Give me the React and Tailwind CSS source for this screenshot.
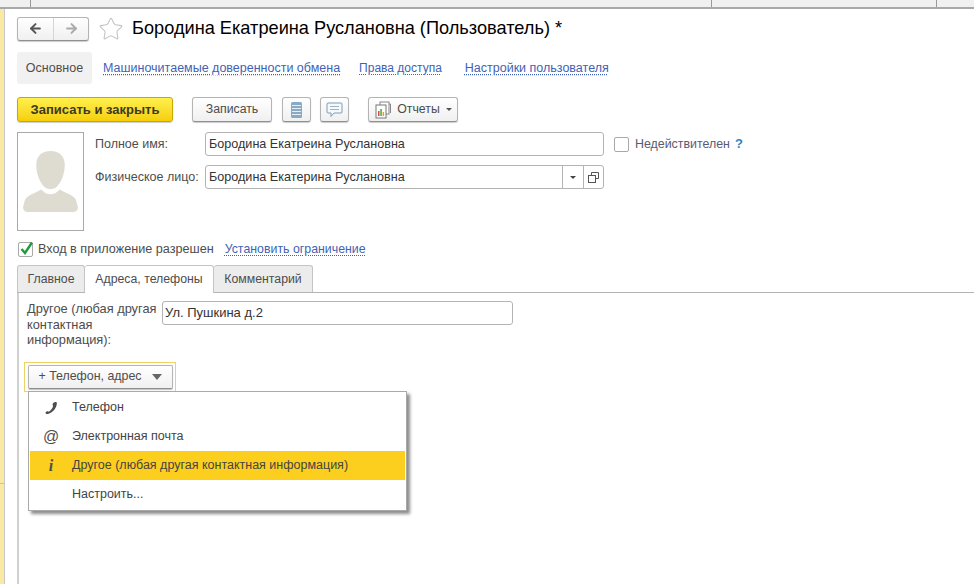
import React from "react";
import { ArrowLeft, ArrowRight, Star } from "lucide-react";

function Link({ children, className = "" }) {
  return (
    <span className={`text-[#3f62b4] underline decoration-dotted decoration-[#3f62b4] underline-offset-2 ${className}`}>
      {children}
    </span>
  );
}

function GrayButton({ children, className = "" }) {
  return (
    <div className={`flex items-center justify-center h-[25px] text-[12.3px] rounded-[3px] border border-[#b4b4b4] border-b-[#8f8f8f] bg-gradient-to-b from-white to-[#f0f0f0] shadow-[0_1px_1px_rgba(0,0,0,0.2)] ${className}`}>
      {children}
    </div>
  );
}

function Field({ children, className = "" }) {
  return (
    <div className={`flex items-center h-[24px] rounded-[3px] border border-[#b4b4b4] bg-white text-[#333] ${className}`}>
      {children}
    </div>
  );
}

// силуэт пользователя
function Avatar() {
  return (
    <svg width="55" height="62" viewBox="0 0 54 66" preserveAspectRatio="none">
      <path d="M27 0c9 0 14 6 14 15 0 10-4 20-9 24-3 2-7 2-10 0-5-4-9-14-9-24C13 6 18 0 27 0z" fill="#dedcd0" />
      <path d="M18 41c3 4 6 5 9 5s6-1 9-5c6 4 14 6 16 11l2 8c0 3-2 5-4 5H4c-2 0-4-2-4-5l2-8c2-5 10-7 16-11z" fill="#dedcd0" />
    </svg>
  );
}

function MenuItem({ icon, active, children }) {
  return (
    <div className={`flex items-center h-[29px] ${active ? "bg-[#fccf1f]" : ""}`}>
      <div className="w-[42px] flex justify-center text-[#4d4d4d]">{icon}</div>
      <span className="text-[#444]">{children}</span>
    </div>
  );
}

export default function App() {
  return (
    <div
      className="w-[974px] h-[584px] overflow-hidden bg-white flex flex-col text-[12.5px] text-[#4d4d4d]"
      style={{ fontFamily: '"Liberation Sans", Arial, sans-serif' }}
    >
      {/* верхняя полоса */}
      <div className="h-[9px] shrink-0 bg-[#f0f0f0] border-b-2 border-[#a8a8a8] flex">
        <div className="w-[31px] border-r border-[#999]" />
        <div className="w-[681px] border-r border-[#999]" />
        <div className="w-[225px] border-r border-[#999]" />
      </div>

      <div className="flex flex-1 min-h-0">
        {/* левая полоса */}
        <div className="w-[5px] shrink-0 bg-[#f9e9a2] border-r border-[#c9c9c9] flex flex-col">
          <div className="h-[475px] border-b border-[#cfc48c]" />
        </div>

        <div className="flex-1 pl-[12px] flex flex-col">
          {/* заголовок */}
          <div className="flex items-center mt-[7px] h-[25px]">
            <div className="flex items-center w-[72px] h-[24px] rounded-[3px] border border-[#b4b4b4] border-b-[#8f8f8f] bg-gradient-to-b from-white to-[#f0f0f0] shadow-[0_1px_1px_rgba(0,0,0,0.2)]">
              <div className="w-[36px] flex justify-center border-r border-[#d5d5d5] h-full items-center">
                <ArrowLeft size={15} strokeWidth={3.2} color="#555" />
              </div>
              <div className="flex-1 flex justify-center">
                <ArrowRight size={15} strokeWidth={3.2} color="#aaa" />
              </div>
            </div>
            <Star size={26} strokeWidth={1} color="#c4c4c4" className="ml-[9px]" />
            <div className="ml-[8px] text-[18.2px] text-black whitespace-nowrap">
              Бородина Екатреина Руслановна (Пользователь) *
            </div>
          </div>

          {/* вкладки формы */}
          <div className="flex items-center mt-[10px] h-[33px] pt-[1px]">
            <div className="w-[75px] h-full rounded-[3px] bg-[#f1f1f1] flex items-center justify-center">Основное</div>
            <Link className="ml-[11px]">Машиночитаемые доверенности обмена</Link>
            <Link className="ml-[19px] text-[12px]">Права доступа</Link>
            <Link className="ml-[23px]">Настройки пользователя</Link>
          </div>

          {/* командная панель */}
          <div className="flex items-center mt-[13px] h-[25px]">
            <div className="w-[156px] h-full rounded-[3px] border border-[#c9a800] bg-gradient-to-b from-[#fff04a] to-[#f5cf00] flex items-center justify-center font-bold text-[13px] text-[#3d3a20] shadow-[0_1px_1px_rgba(0,0,0,0.2)]">
              Записать и закрыть
            </div>
            <GrayButton className="w-[80px] ml-[19px]">Записать</GrayButton>
            <GrayButton className="w-[29px] ml-[10px]">
              <svg width="11" height="16" viewBox="0 0 11 16">
                <rect width="11" height="16" rx="1.5" fill="#8aa9c4" />
                <path d="M1 3.5h9M1 6.5h9M1 9.5h9M1 12.5h9" stroke="#e6eef5" strokeWidth="1" />
              </svg>
            </GrayButton>
            <GrayButton className="w-[29px] ml-[9px]">
              <svg width="17" height="16" viewBox="0 0 17 16" fill="none">
                <path d="M2 1h13a1 1 0 0 1 1 1v8a1 1 0 0 1-1 1H8l-3 3.5V11H2a1 1 0 0 1-1-1V2a1 1 0 0 1 1-1z" stroke="#7f9db5" fill="#f6f9fb" />
                <path d="M4 4.5h9M4 7.5h9" stroke="#9db4c6" />
              </svg>
            </GrayButton>
            <GrayButton className="w-[90px] ml-[19px]">
              <svg width="18" height="18" viewBox="0 0 18 18" fill="none">
                <rect x="6" y="1" width="9" height="12" fill="#fff" stroke="#888" />
                <rect x="2" y="4" width="10" height="13" fill="#fff" stroke="#777" />
                <rect x="4" y="10" width="1.5" height="5" fill="#d44" />
                <rect x="6.300" y="8" width="1.500" height="7" fill="#4a4" />
                <rect x="8.600" y="11" width="1.500" height="4" fill="#e6a020" />
                <path d="M15 3h1.500v9" stroke="#888" />
              </svg>
              <span className="ml-[5px]">Отчеты</span>
              <span className="ml-[6px] w-0 h-0 border-x-[3px] border-x-transparent border-t-[3px] border-t-[#555]" />
            </GrayButton>
          </div>

          {/* шапка пользователя */}
          <div className="flex mt-[10px]">
            <div className="w-[67px] h-[99px] border border-[#a9a9a9] flex items-center justify-center">
              <Avatar />
            </div>
            <div className="ml-[11px] flex flex-col gap-[9px]">
              <div className="flex items-center">
                <div className="w-[110px]">Полное имя:</div>
                <Field className="w-[399px] pl-[3px] text-[12.6px]">Бородина Екатреина Руслановна</Field>
                <div className="ml-[10px] w-[15px] h-[15px] rounded-[2px] border border-[#a9a9a9] bg-white" />
                <div className="ml-[6px] text-[12.4px] text-[#5a5a70]">Недействителен</div>
                <div className="ml-[5px] text-[13px] font-bold text-[#2d84c4]">?</div>
              </div>
              <div className="flex items-center">
                <div className="w-[110px]">Физическое лицо:</div>
                <Field className="w-[399px] pl-[3px] text-[12.6px]">
                  <span className="flex-1">Бородина Екатерина Руслановна</span>
                  <div className="w-[21px] h-full border-l border-[#b4b4b4] flex items-center justify-center">
                    <span className="w-0 h-0 border-x-[3px] border-x-transparent border-t-[3px] border-t-[#444]" />
                  </div>
                  <div className="w-[20px] h-full border-l border-[#b4b4b4] flex items-center justify-center">
                    <svg width="11" height="11" viewBox="0 0 11 11" fill="none" stroke="#555">
                      <path d="M3.500 3V.5h7v6H8" />
                      <rect x=".5" y="3.500" width="7" height="7" />
                    </svg>
                  </div>
                </Field>
              </div>
            </div>
          </div>

          {/* вход в приложение */}
          <div className="flex items-center mt-[10px] h-[16px]">
            <div className="relative ml-[1px] w-[15px] h-[15px] rounded-[2px] border border-[#a9a9a9] bg-white">
              <svg className="absolute -top-[2px] left-0" width="15" height="15" viewBox="0 0 15 15" fill="none">
                <path d="M2.500 8l3.500 4 7-10.500" stroke="#1f9a3c" strokeWidth="2.400" />
              </svg>
            </div>
            <span className="ml-[5px] text-[12.65px]">Вход в приложение разрешен</span>
            <Link className="ml-[11px] text-[12.35px]">Установить ограничение</Link>
          </div>

          {/* вкладки */}
          <div className="flex h-[28px] mt-[8px] border-b border-[#b4b4b4] text-[12.3px]">
            <div className="w-[68px] h-[27px] rounded-t-[3px] border border-b-0 border-[#c4c4c4] bg-[#ececec] flex items-center justify-center">Главное</div>
            <div className="w-[129px] h-[28px] rounded-t-[3px] border-t border-r border-[#c4c4c4] bg-white flex items-center justify-center">Адреса, телефоны</div>
            <div className="w-[99px] h-[27px] rounded-t-[3px] border border-b-0 border-l-0 border-[#c4c4c4] bg-[#ececec] flex items-center justify-center">Комментарий</div>
          </div>

          {/* содержимое вкладки */}
          <div className="relative flex-1 border-l-2 border-[#d0d0d0] pl-[5px]">
            <div className="flex mt-[8px]">
              <div className="w-[133px] ml-[3px] leading-[15.5px] text-[12.8px]">
                Другое (любая другая контактная<br />информация):
              </div>
              <Field className="w-[351px] pl-[2px] ml-[2px] text-[13px]">Ул. Пушкина д.2</Field>
            </div>
            <div className="mt-[14px] w-[152px] h-[30px] border border-[#f0d264] flex items-center justify-center">
              <div className="w-[145px] h-[24px] rounded-[2px] border border-[#b4b4b4] border-b-[#8f8f8f] bg-gradient-to-b from-white to-[#f0f0f0] shadow-[0_1px_1px_rgba(0,0,0,0.25)] flex items-center justify-center text-[12.4px]">
                <span>+ Телефон, адрес</span>
                <span className="ml-[10px] w-0 h-0 border-x-[5px] border-x-transparent border-t-[6px] border-t-[#666]" />
              </div>
            </div>

            {/* выпадающее меню */}
            <div className="absolute left-[9px] top-[98px] w-[379px] h-[120px] bg-white border border-[#a9a9a9] p-px shadow-[3px_3px_3px_rgba(0,0,0,0.45)]">
              <MenuItem icon={<svg width="14" height="14" viewBox="0 0 14 14"><path d="M11.500 1c1 0 1.600.6 1.300 2-.6 4.500-4 8.500-8.800 10-1.300.3-2.500-.3-2.500-1.200 0-.9 1.300-1.800 2.200-1.500.6.200.9.500 1.400.2 1.800-1.200 3.200-3 3.900-5 .2-.6-.2-1-.4-1.500C8.300 2 10.300 1 11.500 1z" fill="#4d4d4d" /></svg>}>
                Телефон
              </MenuItem>
              <MenuItem icon={<span className="text-[16px] leading-none">@</span>}>Электронная почта</MenuItem>
              <MenuItem active icon={<span className="text-[16px] leading-none font-bold italic" style={{ fontFamily: '"Liberation Serif", serif' }}>i</span>}>
                Другое (любая другая контактная информация)
              </MenuItem>
              <MenuItem>Настроить...</MenuItem>
            </div>
          </div>
        </div>
      </div>
    </div>
  );
}
